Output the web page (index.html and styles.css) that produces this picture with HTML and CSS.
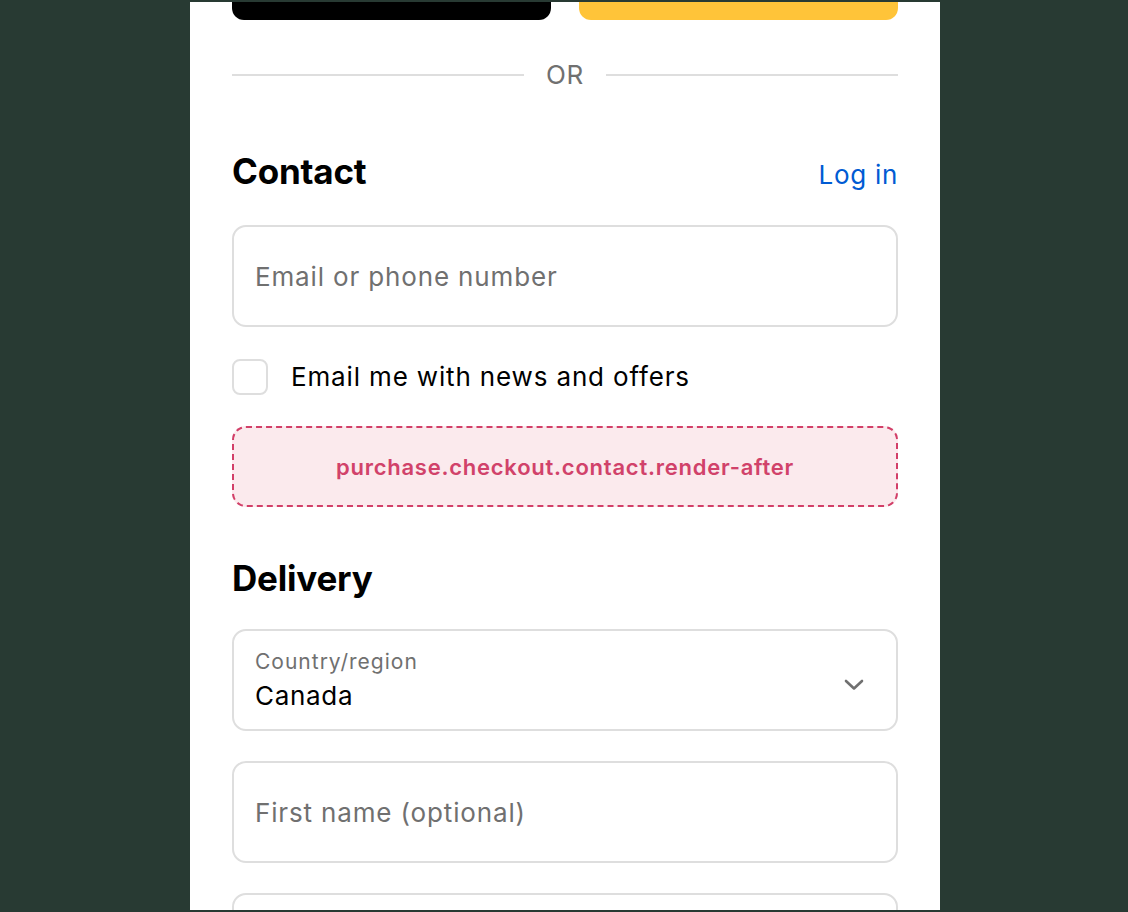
FILE: index.html
```html
<!DOCTYPE html>
<html lang="en">
<head>
<meta charset="utf-8">
<title>Checkout</title>
<link rel="stylesheet" href="styles.css">
</head>
<body>
<main class="panel">
  <div class="pay-row">
    <div class="pay pay-black"></div>
    <div class="pay pay-yellow"></div>
  </div>
  <div class="divider">
    <span class="divider-line"></span>
    <span class="divider-text">OR</span>
    <span class="divider-line"></span>
  </div>

  <section class="section-contact">
    <div class="section-head">
      <h2 class="heading">Contact</h2>
      <a class="login" href="#">Log in</a>
    </div>
    <div class="field">
      <span class="placeholder">Email or phone number</span>
    </div>
    <label class="check-row">
      <span class="checkbox"></span>
      <span class="check-label">Email me with news and offers</span>
    </label>
    <div class="ext-slot">purchase.checkout.contact.render-after</div>
  </section>

  <section class="section-delivery">
    <h2 class="heading">Delivery</h2>
    <div class="fields">
      <div class="field field-select">
        <div class="select-text">
          <span class="select-label">Country/region</span>
          <span class="select-value">Canada</span>
        </div>
        <svg class="chevron" width="20" height="12" viewBox="0 0 20 12" aria-hidden="true">
          <path d="M2 2 L10 9.5 L18 2" fill="none" stroke="#707070" stroke-width="2.6" stroke-linecap="round" stroke-linejoin="round"/>
        </svg>
      </div>
      <div class="field">
        <span class="placeholder">First name (optional)</span>
      </div>
      <div class="field"></div>
    </div>
  </section>
</main>
</body>
</html>
```

FILE: styles.css
```css
html, body {
  margin: 0;
  padding: 0;
}

body {
  background: #283a33;
  font-family: Inter, "Noto Sans", "Liberation Sans", sans-serif;
  color: #000;
  height: 912px;
  overflow: hidden;
}

.panel {
  display: block;
  box-sizing: border-box;
  margin: 2px 0 0 190px;
  width: 750px;
  height: 908px;
  background: #fff;
  overflow: hidden;
  padding: 0 42px;
}

.pay-row {
  display: flex;
  gap: 28px;
  margin-top: -30px;
}

.pay {
  flex: 1;
  height: 48px;
  border-radius: 12px;
}

.pay-black { background: #000; }
.pay-yellow { background: #ffc439; }

.divider {
  display: flex;
  align-items: center;
  gap: 22px;
  height: 30px;
  margin-top: 40px;
}

.divider-line {
  flex: 1;
  height: 2px;
  background: #dedede;
}

.divider-text {
  font-size: 26px;
  color: #707070;
  line-height: 30px;
  letter-spacing: 0.8px;
}

.section-head {
  display: flex;
  justify-content: space-between;
  align-items: baseline;
  margin-top: 60px;
}

.heading {
  margin: 0;
  font-size: 35px;
  line-height: 42px;
  font-weight: 700;
  letter-spacing: -0.2px;
}

.login {
  font-size: 26px;
  color: #005bd3;
  text-decoration: none;
  letter-spacing: 0.7px;
}

.field {
  box-sizing: border-box;
  height: 102px;
  border: 2px solid #dedede;
  border-radius: 14px;
  padding: 0 20px 0 21px;
  display: flex;
  align-items: center;
  font-size: 26px;
  letter-spacing: 0.85px;
}

.section-contact .field {
  margin-top: 33px;
}

.placeholder {
  color: #707070;
}

.check-row {
  display: flex;
  align-items: center;
  gap: 23px;
  margin-top: 32px;
}

.checkbox {
  box-sizing: border-box;
  width: 36px;
  height: 36px;
  border: 2px solid #dedede;
  border-radius: 8px;
}

.check-label {
  font-size: 26px;
  line-height: 36px;
  letter-spacing: 0.85px;
}

.ext-slot {
  box-sizing: border-box;
  margin-top: 31px;
  height: 81px;
  border: 2px dashed #d23f68;
  border-radius: 14px;
  background: #fbeaed;
  color: #d1426a;
  font-size: 22px;
  font-weight: 600;
  letter-spacing: 0.76px;
  display: flex;
  align-items: center;
  justify-content: center;
}

.section-delivery {
  margin-top: 50px;
}

.fields {
  display: flex;
  flex-direction: column;
  gap: 30px;
  margin-top: 30px;
}

.field-select {
  justify-content: space-between;
}

.select-text {
  display: flex;
  flex-direction: column;
  padding-top: 4px;
}

.select-label {
  font-size: 21px;
  line-height: 28px;
  color: #707070;
  letter-spacing: 1px;
}

.select-value {
  font-size: 26px;
  line-height: 40px;
  color: #000;
  letter-spacing: 0.7px;
}

.chevron {
  margin-top: 9px;
  margin-right: 12px;
}
```
